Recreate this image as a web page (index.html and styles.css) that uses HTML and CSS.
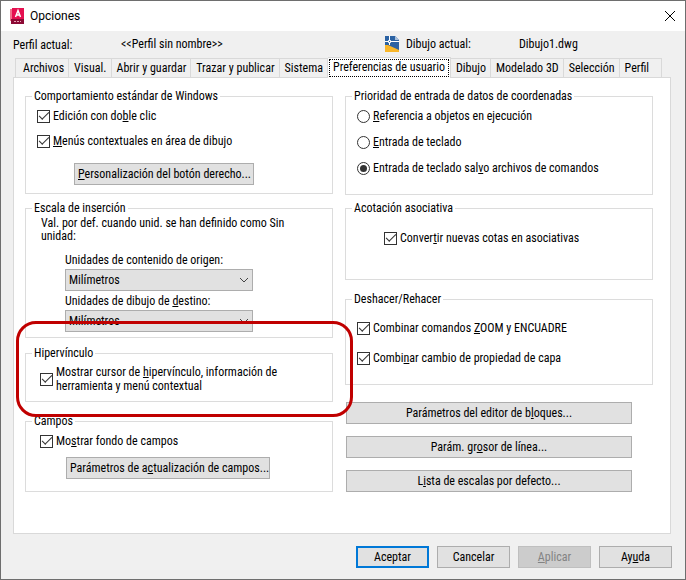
FILE: index.html
```html
<!DOCTYPE html>
<html lang="es">
<head>
    <meta charset="UTF-8">
    <meta name="viewport" content="width=device-width, initial-scale=1.0">
    <title>Opciones</title>
    <link rel="stylesheet" href="styles.css">
</head>
<body>
    <div class="dialog">
        <header class="title-bar">
            <svg class="app-icon" width="16" height="18" viewBox="0 0 16 18">
                <path fill="#f0718b" d="M1 2h3v12H1z"/>
                <path fill="#e51050" d="M3 1h12v12H3z"/>
                <path fill="#8c0a35" d="M2 12h13v5H2z"/>
                <path fill="none" stroke="#fff" stroke-width="1.500" d="M6.500 10L9 3.500l2.500 6.500M7.500 8h3"/>
                <path fill="none" stroke="#e9a6b8" d="M5 14.500h2M8 14.500h2M11 14.500h1"/>
            </svg>
            <h1>Opciones</h1>
            <button class="close-button" aria-label="Cerrar">
                <svg width="12" height="12" viewBox="0 0 12 12">
                    <path fill="none" stroke="#000" d="M1 1l10 10M11 1L1 11"/>
                </svg>
            </button>
        </header>

        <div class="profile-row">
            <span class="profile-label">Perfil actual:</span>
            <span>&lt;&lt;Perfil sin nombre&gt;&gt;</span>
            <span class="drawing-label">
                <svg width="14" height="16" viewBox="0 0 14 16">
                    <path fill="#2b62a3" d="M0 0h10l4 4v10H0z"/>
                    <path fill="#a9bfda" d="M10 0v4h4z"/>
                    <path fill="#f8b62a" d="M0 9h3l11 5v2H0z"/>
                    <path fill="none" stroke="#fff" d="M4.500 0v9M0 5.500h14"/>
                    <path fill="#2b62a3" stroke="#fff" d="M3.500 4.500h2v2h-2z"/>
                </svg>
                Dibujo actual:
            </span>
            <span>Dibujo1.dwg</span>
        </div>

        <div class="tabs" role="tablist">
            <button class="tab" role="tab">Archivos</button>
            <button class="tab" role="tab">Visual.</button>
            <button class="tab" role="tab">Abrir y guardar</button>
            <button class="tab" role="tab">Trazar y publicar</button>
            <button class="tab" role="tab">Sistema</button>
            <button class="tab active" role="tab" aria-selected="true"><span>Preferencias de usuario</span></button>
            <button class="tab" role="tab">Dibujo</button>
            <button class="tab" role="tab">Modelado 3D</button>
            <button class="tab" role="tab">Selección</button>
            <button class="tab" role="tab">Perfil</button>
        </div>

        <main class="panel" role="tabpanel">
            <div class="column">
                <fieldset class="group windows-group">
                    <legend>Comportamiento estándar de Windows</legend>
                    <label class="option"><input type="checkbox" checked><span>Edición con do<u>b</u>le clic</span></label>
                    <label class="option"><input type="checkbox" checked><span><u>M</u>enús contextuales en área de dibujo</span></label>
                    <button class="button"><u>P</u>ersonalización del botón derecho...</button>
                </fieldset>

                <fieldset class="group scale-group">
                    <legend>Escala de inserción</legend>
                    <p>Val. por def. cuando unid. se han definido como Sin unidad:</p>
                    <div class="units">
                        <label for="source-units">Unidades de contenido de ori<u>g</u>en:</label>
                        <div class="select">
                            <select id="source-units"><option>Milímetros</option></select>
                            <svg width="10" height="6" viewBox="0 0 10 6"><path fill="none" stroke="#444" d="M1 1l4 4 4-4"/></svg>
                        </div>
                        <label for="target-units">Unidades de dibujo de <u>d</u>estino:</label>
                        <div class="select">
                            <select id="target-units"><option>Milímetros</option></select>
                            <svg width="10" height="6" viewBox="0 0 10 6"><path fill="none" stroke="#444" d="M1 1l4 4 4-4"/></svg>
                        </div>
                    </div>
                </fieldset>

                <div class="highlight">
                    <fieldset class="group link-group">
                        <legend>Hipervínculo</legend>
                        <label class="option"><input type="checkbox" checked><span>Mostrar cursor de <u>h</u>ipervínculo, información de herramienta y menú contextual</span></label>
                    </fieldset>
                </div>

                <fieldset class="group fields-group">
                    <legend>Campos</legend>
                    <label class="option"><input type="checkbox" checked><span>Mo<u>s</u>trar fondo de campos</span></label>
                    <button class="button">Parámetros de a<u>c</u>tualización de campos...</button>
                </fieldset>
            </div>

            <div class="column">
                <fieldset class="group priority-group">
                    <legend>Prioridad de entrada de datos de coordenadas</legend>
                    <label class="option"><input type="radio" name="priority"><span><u>R</u>eferencia a objetos en ejecución</span></label>
                    <label class="option"><input type="radio" name="priority"><span><u>E</u>ntrada de teclado</span></label>
                    <label class="option"><input type="radio" name="priority" checked><span>Entrada de teclado sal<u>v</u>o archivos de comandos</span></label>
                </fieldset>

                <fieldset class="group dimension-group">
                    <legend>Acotación asociativa</legend>
                    <label class="option"><input type="checkbox" checked><span>Conver<u>t</u>ir nuevas cotas en asociativas</span></label>
                </fieldset>

                <fieldset class="group undo-group">
                    <legend>Deshacer/Rehacer</legend>
                    <label class="option"><input type="checkbox" checked><span>Combinar comandos <u>Z</u>OOM y ENCUADRE</span></label>
                    <label class="option"><input type="checkbox" checked><span>Combi<u>n</u>ar cambio de propiedad de capa</span></label>
                </fieldset>

                <div class="settings-buttons">
                    <button class="button">Parámetros del editor de b<u>l</u>oques...</button>
                    <button class="button">Parám. gr<u>o</u>sor de línea...</button>
                    <button class="button">L<u>i</u>sta de escalas por defecto...</button>
                </div>
            </div>
        </main>

        <footer class="actions">
            <button class="button default">Aceptar</button>
            <button class="button">Cancelar</button>
            <button class="button" disabled><u>A</u>plicar</button>
            <button class="button">Ay<u>u</u>da</button>
        </footer>
    </div>
</body>
</html>
```
FILE: styles.css
```css
* {
    box-sizing: border-box;
}
body {
    margin: 0;
    background: #f0f0f0;
    color: #000;
    font-family: "Roboto Condensed", Roboto, sans-serif;
    font-size: 12px;
    line-height: 14px;
}
button, select {
    font: inherit;
    color: inherit;
}
u {
    text-underline-offset: 1px;
}
.dialog {
    min-height: 100vh;
    border: 1px solid #6e6e6e;
    display: flex;
    flex-direction: column;
}

/* Title bar */
.title-bar {
    display: flex;
    align-items: center;
    gap: 5px;
    height: 30px;
    padding: 0 8px;
    background: #fff;
}
.title-bar h1 {
    flex: 1;
    margin: 0;
    font-family: Roboto, sans-serif;
    font-size: 12px;
    font-weight: normal;
}
.close-button {
    display: flex;
    padding: 1px;
    border: none;
    background: none;
}

/* Profile and drawing names */
.profile-row {
    display: grid;
    grid-template-columns: 108px 1fr 134px 166px;
    align-items: center;
    height: 25px;
    padding-left: 12px;
}
.profile-label {
    padding-top: 3px;
}
.drawing-label {
    display: flex;
    align-items: center;
    gap: 7px;
}

/* Tabs */
.tabs {
    display: flex;
    align-items: flex-end;
    height: 21px;
    padding: 0 14px;
}
.tab {
    height: 19px;
    padding: 0 4px 0 5px;
    border: 1px solid #d9d9d9;
    border-bottom: none;
    border-left-width: 0;
    background: #f0f0f0;
    white-space: nowrap;
}
.tab:first-child {
    padding-left: 7px;
    border-left-width: 1px;
}
.tab:last-child {
    padding-right: 12px;
}
.tab.active {
    position: relative;
    height: 21px;
    margin-bottom: -1px;
    padding: 0 1px;
    background: #fff;
}
.tab.active span {
    display: block;
    padding: 0 3px 2px;
    border: 1px dotted #000;
}

/* Panel */
.panel {
    display: flex;
    gap: 12px;
    flex: 1;
    margin: 0 14px 0 12px;
    padding: 11px 17px 20px 11px;
    border: 1px solid #d9d9d9;
    background: #fff;
}
.column {
    flex: 1;
    display: flex;
    flex-direction: column;
    min-width: 0;
}
.group {
    display: flex;
    flex-direction: column;
    align-items: flex-start;
    min-width: 0;
    margin: 0 0 7px;
    padding: 6px 11px 8px;
    border: 1px solid #dcdcdc;
}
.group legend {
    margin-left: -5px;
    padding: 0 2px;
}
.option {
    display: flex;
    align-items: center;
    gap: 3px;
}
.option input {
    flex: none;
    display: grid;
    place-items: center;
    appearance: none;
    width: 13px;
    height: 13px;
    margin: 0;
    border: 1px solid #333;
    background: #fff;
}
.option input[type="checkbox"]:checked::before {
    content: "";
    width: 9px;
    height: 4px;
    margin-top: -3px;
    border: solid #333;
    border-width: 0 0 1px 1px;
    transform: rotate(-45deg);
}
.option input[type="radio"] {
    border-radius: 50%;
}
.option input[type="radio"]:checked::before {
    content: "";
    width: 7px;
    height: 7px;
    border-radius: 50%;
    background: #333;
}
.button {
    height: 22px;
    padding: 0 3px;
    border: 1px solid #adadad;
    background: #e1e1e1;
    white-space: nowrap;
}
.button.default {
    border: 2px solid #0078d7;
}
.button:disabled {
    border-color: #bfbfbf;
    background: #ccc;
    color: #838383;
}

/* Left column */
.windows-group .option {
    margin-bottom: 11px;
}
.windows-group .button {
    width: 180px;
    margin: 4px 0 0 37px;
}
.scale-group {
    margin-bottom: 8px;
    padding: 2px 11px 4px;
}
.scale-group p {
    margin: 0 24px 10px 4px;
    line-height: 13px;
}
.units {
    display: grid;
    gap: 2px;
    width: 188px;
    margin-left: 28px;
}
.select {
    position: relative;
    margin-bottom: 1px;
}
.select select {
    display: block;
    width: 100%;
    height: 22px;
    padding: 0 3px;
    appearance: none;
    border: 1px solid #adadad;
    border-radius: 0;
    background: #e1e1e1;
}
.select svg {
    position: absolute;
    top: 8px;
    right: 4px;
    pointer-events: none;
}
.highlight {
    position: relative;
    margin-bottom: 12px;
}
.highlight::after {
    content: "";
    position: absolute;
    inset: -25px -20px -15px -9px;
    border: 3px solid #c00000;
    border-radius: 20px;
    pointer-events: none;
}
.link-group {
    margin: 0;
    padding: 5px 40px 8px 14px;
}
.link-group legend {
    margin-left: -8px;
}
.fields-group {
    margin: 0;
    padding: 6px 14px 12px;
}
.fields-group legend {
    margin-left: -8px;
}
.fields-group .button {
    width: 204px;
    margin: 9px 0 0 26px;
}

/* Right column */
.priority-group {
    gap: 12px;
    margin-bottom: 6px;
    padding-bottom: 19px;
}
.dimension-group {
    margin-bottom: 12px;
    padding: 16px 38px 34px;
}
.dimension-group legend {
    margin-left: -32px;
}
.undo-group {
    gap: 16px;
    margin-bottom: 17px;
    padding: 15px 11px 19px;
}
.settings-buttons {
    display: flex;
    flex-direction: column;
    gap: 12px;
    padding: 0 21px 0 1px;
}

/* Bottom buttons */
.actions {
    display: flex;
    justify-content: flex-end;
    gap: 8px;
    padding: 12px 13px 11px;
}
.actions .button {
    width: 73px;
}
```
